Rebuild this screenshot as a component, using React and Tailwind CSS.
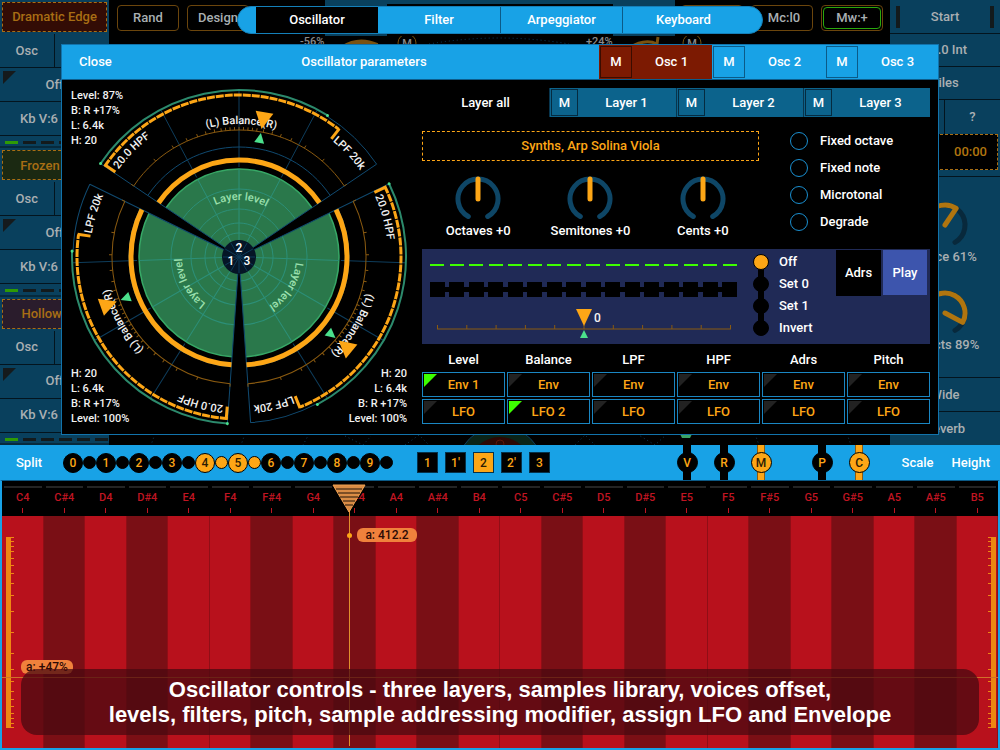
import { useState } from "react";

const instruments = [
  { name: "Dramatic Edge", tint: "bg-[#330c05]" },
  { name: "Frozen Mist", tint: "bg-[#1b2912]" },
  { name: "Hollow Pad", tint: "bg-[#2a1c2c]" },
];

const tabs = ["Oscillator", "Filter", "Arpeggiator", "Keyboard"];
const voices = ["Fixed octave", "Fixed note", "Microtonal", "Degrade"];
const sets = ["Off", "Set 0", "Set 1", "Invert"];

const assigns = [
  { label: "Level", env: "Env 1", lfo: "LFO" },
  { label: "Balance", env: "Env", lfo: "LFO 2" },
  { label: "LPF", env: "Env", lfo: "LFO" },
  { label: "HPF", env: "Env", lfo: "LFO" },
  { label: "Adrs", env: "Env", lfo: "LFO" },
  { label: "Pitch", env: "Env", lfo: "LFO" },
];

const noteNames = ["C", "C#", "D", "D#", "E", "F", "F#", "G", "G#", "A", "A#", "B"];
const notes = [4, 5].flatMap((octave) => noteNames.map((n) => n + octave));

// angle is measured clockwise from straight up
function polar(r, angle) {
  const a = (angle * Math.PI) / 180;
  return [(r * Math.sin(a)).toFixed(2), (-r * Math.cos(a)).toFixed(2)];
}

function arc(r, from, to) {
  const [x1, y1] = polar(r, from);
  const [x2, y2] = polar(r, to);
  return `M${x1} ${y1}A${r} ${r} 0 ${to - from > 180 ? 1 : 0} 1 ${x2} ${y2}`;
}

function spoke(r1, r2, angle) {
  const [x1, y1] = polar(r1, angle);
  const [x2, y2] = polar(r2, angle);
  return `M${x1} ${y1}L${x2} ${y2}`;
}

const EDGE = 56;
const balanceTicks = [2, 4, 6, 8, 11, 15, 19, 24, 31, 41, 56];

/* ---------- layer dial ---------- */

function Sector({ id, rotate, level, ring }) {
  const [ex, ey] = polar(level, EDGE);
  const [sx, sy] = polar(level, -EDGE);
  return (
    <g transform={`rotate(${rotate})`} fill="none">
      <path d={`M0 0L${sx} ${sy}A${level} ${level} 0 0 1 ${ex} ${ey}Z`} fill="#2a784b" />
      <path d={arc(level, -EDGE, EDGE)} stroke="#37a866" strokeWidth="1.5" />
      <path d={[-28, 0, 28].map((a) => spoke(level + 2, 166, a)).join("")} stroke="#0e3d5c" />
      <path d={[-28, 0, 28].map((a) => spoke(17, level, a)).join("")} stroke="#2c8f78" />
      {[24, 34, 48, 68].map((r) => (
        <path key={r} d={arc(r, -EDGE, EDGE)} stroke="#2c8f78" />
      ))}
      <path d={spoke(16, 166, -EDGE) + spoke(16, 166, EDGE) + arc(166, 32, EDGE) + arc(110, -EDGE, EDGE)} stroke="#104a70" />

      <path d={arc(ring, -EDGE, EDGE)} stroke="#fda616" strokeWidth="5" />

      <path d={arc(127, -EDGE, EDGE)} stroke="#8a5a10" />
      <path
        d={balanceTicks.map((a) => spoke(127, 130, a) + spoke(127, 130, -a)).join("") + spoke(127, 130, 0)}
        stroke="#8a5a10"
      />

      <path d={arc(167, -EDGE, 32)} stroke="#2c8a6c" strokeWidth="2" />
      <circle cx={polar(167, 32)[0]} cy={polar(167, 32)[1]} r="1.5" fill="#4be08c" />
      <circle cx={polar(167, -EDGE)[0]} cy={polar(167, -EDGE)[1]} r="1.5" fill="#4be08c" />
      <path d={arc(162, -EDGE, 38)} stroke="#fda616" strokeWidth="3" strokeDasharray="8 1" />
      <path d={spoke(150, 163, -EDGE + 0.5) + spoke(150, 163, 38)} stroke="#fda616" strokeWidth="3" />

      <path id={`${id}-outer`} d={arc(149, -54, EDGE)} />
      <path id={`${id}-lpf`} d={arc(149, 39, 70)} />
      <path id={`${id}-balance`} d={arc(133, -40, 42)} />
      <path id={`${id}-level`} d={arc(57, -56, 60)} />
      <g fill="#f2f2f2" className="text-[11px] font-medium">
        <text><textPath href={`#${id}-outer`}>20.0 HPF</textPath></text>
        <text><textPath href={`#${id}-lpf`}>LPF 20k</textPath></text>
        <text textAnchor="middle"><textPath href={`#${id}-balance`} startOffset="50%">(L) Balance(R)</textPath></text>
        <text textAnchor="middle" fill="#9be0ae"><textPath href={`#${id}-level`} startOffset="50%">Layer level</textPath></text>
      </g>

      <path d="M0 -130L-9 -147L9 -147Z" transform="rotate(10)" fill="#fda616" />
      <path d="M0 -126L-5 -116L5 -116Z" transform="rotate(10)" fill="#4be08c" />
    </g>
  );
}

function Readout({ lines, className }) {
  return (
    <div className={`absolute text-[11px] leading-[15px] text-[#f2f2f2] ${className}`}>
      {lines.map((l) => (
        <div key={l}>{l}</div>
      ))}
    </div>
  );
}

function LayerDial() {
  return (
    <div className="relative w-[354px] shrink-0">
      <svg viewBox="-177 -177 354 354" className="block h-[354px] w-[354px]">
        <Sector id="layer2" rotate={0} level={88} ring={97} />
        <Sector id="layer3" rotate={120} level={100} ring={108} />
        <Sector id="layer1" rotate={240} level={100} ring={108} />
        <circle r="17" fill="#051526" />
        <path
          d={Array.from({ length: 12 }, (_, i) => spoke(0, 16, i * 30)).join("")}
          stroke="#0c3a58"
        />
        <g fill="#fff" textAnchor="middle" className="text-[12px] font-medium">
          <text x="0" y="-5">2</text>
          <text x="-8" y="8">1</text>
          <text x="8" y="8">3</text>
        </g>
      </svg>
      <Readout className="left-[9px] top-2" lines={["Level: 87%", "B: R +17%", "L: 6.4k", "H: 20"]} />
      <Readout className="bottom-2 left-[9px]" lines={["H: 20", "L: 6.4k", "B: R +17%", "Level: 100%"]} />
      <Readout className="bottom-2 right-[9px] text-right" lines={["H: 20", "L: 6.4k", "B: R +17%", "Level: 100%"]} />
    </div>
  );
}

/* ---------- dialog controls ---------- */

function Knob({ label }) {
  return (
    <label className="flex flex-col items-center">
      <span className="relative block">
        <svg viewBox="-24 -24 48 48" className="block size-12" fill="none" strokeLinecap="round">
          <path d={arc(20, -151, 151)} stroke="#0e4666" strokeWidth="5" />
          <path d="M0 -20V0" stroke="#fda616" strokeWidth="5" />
        </svg>
        <input type="range" min="-12" max="12" defaultValue="0" className="absolute inset-0 size-full cursor-pointer opacity-0" />
      </span>
      <span className="leading-4">{label}</span>
    </label>
  );
}

function MuteButton({ className }) {
  return (
    <button className={`flex h-full items-center justify-center border ${className}`}>M</button>
  );
}

function AssignButton({ children }) {
  const on = /\d/.test(children);
  return (
    <button className="relative flex h-[25px] items-center justify-center border border-[#1a86c2] text-[#fda616]">
      <svg viewBox="0 0 13 13" className="absolute left-px top-px size-[13px]">
        <path d="M0 0H13L0 13Z" fill={on ? "#3dff00" : "#222"} />
      </svg>
      {children}
    </button>
  );
}

function StepPanel() {
  const [set, setSet] = useState("Off");
  const steps = Array.from({ length: 16 }, (_, i) => i);
  return (
    <div className="flex h-[95px] bg-[#202a56] pl-2">
      <div className="w-[307px] pt-[15px]">
        <div className="flex justify-between">
          {steps.map((i) => (
            <span key={i} className="h-0.5 w-[14px] bg-[#3dff00]" />
          ))}
        </div>
        <div className="mt-4 flex items-center">
          {steps.map((i) => (
            <span key={i} className="flex flex-1 items-center last:flex-none">
              <span className="h-[15px] w-[15px] bg-black" />
              {i < 15 && <span className="h-[5px] flex-1 bg-black" />}
            </span>
          ))}
        </div>
        <div className="relative mt-3">
          <svg viewBox="0 0 307 32" className="block h-8 w-full">
            <path d="M7 20H301" stroke="#8a5a10" />
            <path d={Array.from({ length: 11 }, (_, i) => `M${7.5 + i * 29.3} 20v-4`).join("")} stroke="#8a5a10" />
            <path d="M146 0H162L154 17Z" fill="#fda616" />
            <path d="M150 29H158L154 21Z" fill="#4be08c" />
            <text x="164" y="13" fill="#f2f2f2" className="text-[12px]">0</text>
          </svg>
          <input
            type="range"
            aria-label="Offset"
            min="-5"
            max="5"
            defaultValue="0"
            className="absolute inset-0 size-full cursor-pointer opacity-0"
          />
        </div>
      </div>
      <div className="ml-4 flex w-20 flex-col pt-[2px]">
        {sets.map((s, i) => (
          <label key={s} className="relative flex h-[22px] items-center gap-2.5">
            {i < 3 && <span className="absolute left-[5px] top-3 h-5 w-1.5 bg-black" />}
            <input
              type="radio"
              name="set"
              checked={set === s}
              onChange={() => setSet(s)}
              className="relative size-4 appearance-none rounded-full border border-black bg-black checked:bg-[#fda616]"
            />
            {s}
          </label>
        ))}
      </div>
      <div className="ml-auto flex gap-0.5 pr-[3px] pt-px">
        <button className="h-[46px] w-[45px] bg-black">Adrs</button>
        <button className="h-[45px] w-[44px] bg-[#3d55ad]">Play</button>
      </div>
    </div>
  );
}

function OscillatorDialog() {
  return (
    <div role="dialog" aria-label="Oscillator parameters" className="absolute inset-x-[61px] top-11 border border-[#1273ab] bg-black text-white">
      <div className="flex h-[35px] border-b border-[#0d5c8a] bg-[#18a2e6]">
        <button className="px-[17px]">Close</button>
        <h2 className="flex flex-1 items-center justify-center">Oscillator parameters</h2>
        <div className="flex w-[339px]">
          {["Osc 1", "Osc 2", "Osc 3"].map((osc, i) => (
            <div key={osc} className={`flex flex-1 p-px ${i === 0 ? "bg-[#7c1a02]" : ""}`}>
              <MuteButton className={i === 0 ? "w-8 border-[#3a0c00]" : "w-8 border-[#0b5a87]"} />
              <button className="flex-1">{osc}</button>
            </div>
          ))}
        </div>
      </div>

      <div className="flex">
        <LayerDial />
        <div className="flex-1 pl-[6px] pr-2 pt-2">
          <div className="grid h-[29px] grid-cols-4">
            <button>Layer all</button>
            {["Layer 1", "Layer 2", "Layer 3"].map((layer) => (
              <div key={layer} className="flex border-l border-[#08354d] bg-[#0c638c] p-px">
                <MuteButton className="w-[27px] border-[#052b40]" />
                <button className="flex-1">{layer}</button>
              </div>
            ))}
          </div>

          <div className="mt-[14px] flex h-[118px]">
            <div className="w-[337px]">
              <button className="h-[30px] w-full border border-dashed border-[#fda616] text-[#fda616]">
                Synths, Arp Solina Viola
              </button>
              <div className="mt-[14px] grid grid-cols-3">
                <Knob label="Octaves +0" />
                <Knob label="Semitones +0" />
                <Knob label="Cents +0" />
              </div>
            </div>
            <div className="ml-[31px] flex flex-col gap-[7px]">
              {voices.map((v) => (
                <label key={v} className="flex h-5 items-center gap-3">
                  <input type="checkbox" className="size-[18px] appearance-none rounded-full border border-[#1a8fd0] checked:bg-[#fda616]" />
                  {v}
                </label>
              ))}
            </div>
          </div>

          <StepPanel />

          <div className="mt-1.5 grid grid-cols-6 gap-x-0.5">
            {assigns.map((a) => (
              <div key={a.label} className="flex flex-col gap-y-0.5">
                <div className="h-5 text-center leading-5">{a.label}</div>
                <AssignButton>{a.env}</AssignButton>
                <AssignButton>{a.lfo}</AssignButton>
              </div>
            ))}
          </div>
        </div>
      </div>
    </div>
  );
}

/* ---------- synth behind the dialog ---------- */

function InstrumentStrip({ name, tint }) {
  return (
    <div className="flex flex-col border-b-2 border-[#062a3d]">
      <div className="h-[34px] p-0.5">
        <button className={`size-full border border-dashed border-[#a86e14] text-[#a86e14] ${tint}`}>{name}</button>
      </div>
      <div className="grid h-[34px] grid-cols-2 border-b border-[#03141e]">
        <button className="border-r border-[#03141e]">Osc</button>
        <button>Mix</button>
      </div>
      <button className="relative h-[34px] border-b border-[#03141e]">
        <svg viewBox="0 0 13 13" className="absolute left-[3px] top-[3px] size-[13px]">
          <path d="M0 0H13L0 13Z" fill="#151a1c" />
        </svg>
        Off
      </button>
      <button className="h-[34px] border-b border-[#03141e] pl-5 text-left">Kb V:6 G:6</button>
      <div className="flex gap-[5px] pl-[5px] pt-[5px]">
        {[0, 1, 2, 3, 4, 5].map((i) => (
          <span key={i} className={`h-[3px] w-[13px] ${i === 0 ? "bg-[#2f9a05]" : "bg-[#131a1c]"}`} />
        ))}
      </div>
    </div>
  );
}

function SideKnob({ label, value }) {
  return (
    <div className="flex flex-col items-center pt-2">
      <svg viewBox="-24 -24 48 48" className="block size-12" fill="none" strokeLinecap="round" strokeLinejoin="round" strokeWidth="5">
        <path d={arc(20, -150, 150)} stroke="#08293c" />
        <path d={`${arc(20, -150, value)}L0 0`} stroke="#b0750f" />
      </svg>
      <div className="h-8 leading-4">{label}</div>
    </div>
  );
}

function BackPanel() {
  return (
    <div className="flex h-[445px] text-[#a9afb2]">
      <div className="grid w-[109px] shrink-0 grid-cols-1 grid-rows-3 bg-[#09405d]">
        {instruments.map((i) => (
          <InstrumentStrip key={i.name} {...i} />
        ))}
      </div>

      <div className="relative min-w-0 flex-1 overflow-hidden">
        <div className="flex px-[7px]">
          <div className="flex gap-2 pl-px pt-[5px]">
            <button className="h-[26px] w-[62px] rounded border border-[#6b450c]">Rand</button>
            <button className="h-[26px] w-[62px] rounded border border-[#6b450c]">Design</button>
          </div>
          <div className="ml-auto mr-1.5 flex h-9 w-[350px] bg-[#09405d] px-[62px] pt-1">
            <div className="flex-1 bg-black" />
          </div>
          <div className="flex gap-2 pt-[5px]">
            <button className="h-[26px] w-[62px] rounded border border-[#6b450c]" aria-label="Mode" />
            <button className="h-[26px] w-[62px] rounded border border-[#6b450c] pl-1">Mc:l0</button>
            <button className="h-[26px] w-[62px] rounded border border-[#6b450c] p-px">
              <span className="flex size-full items-center justify-center rounded border border-[#2aa80c]">Mw:+</span>
            </button>
          </div>
        </div>
        <svg viewBox="0 0 781 409" className="absolute inset-x-0 top-9 h-[409px] w-full" fill="none">
          <g fill="#8a8a8a" className="text-[11px]">
            <text x="191" y="9">-56%</text>
            <text x="477" y="9">+24%</text>
          </g>
          <g stroke="#7a5210">
            <circle cx="298" cy="7" r="9" />
            <circle cx="583" cy="7" r="9" />
            <path d="M234 12Q250 2 268 10" strokeWidth="6" />
            <path d="M520 12Q536 2 548 8L549 1" strokeWidth="3" />
          </g>
          <g fill="#8a8a8a" textAnchor="middle" className="text-[11px]">
            <text x="298" y="11">M</text>
            <text x="583" y="11">M</text>
          </g>
          <path d="M320 8Q390 -4 460 8" stroke="#0e3d5c" strokeDasharray="1 3" />
          <circle cx="391" cy="433" r="43" fill="#0a2418" stroke="#0e3d5c" />
          <circle cx="391" cy="433" r="32" fill="#2c0703" />
          <circle cx="391" cy="408" r="4" stroke="#5c1508" />
          <path
            d="M46 398L42 409M136 398L132 409M200 398L194 409M236 400L254 409L262 400M296 409L310 399L320 409M466 409L476 399L486 409M528 398L546 409L558 398M646 398L650 409M738 398L742 409"
            stroke="#0e3d5c"
            strokeDasharray="1 3"
          />
          <path d="M573 402L571 398H583L581 402Z" fill="#3aa365" />
        </svg>
      </div>

      <div className="flex w-[110px] shrink-0 flex-col bg-[#09405d]">
        <button className="flex h-[34px] items-center justify-between border-b border-[#03141e] px-1.5">
          <span className="h-[22px] w-1 bg-[#131a1c]" />
          Start
          <span className="h-[22px] w-1 bg-[#131a1c]" />
        </button>
        <button className="h-[33px] border-b border-[#03141e]">16.0 Int</button>
        <button className="h-[33px] border-b border-[#03141e]">Files</button>
        <div className="grid h-[34px] grid-cols-2">
          <button className="border-r border-[#03141e]">Rec</button>
          <button>?</button>
        </div>
        <div className="mr-0.5 flex h-[36px] items-center justify-end border border-dashed border-[#a86e14] bg-black pr-[10px] text-[#b0750f]">
          00:00
        </div>
        <div className="mt-1.5 border-t border-[#03141e] pt-4">
          <SideKnob label="Space 61%" value={34} />
          <SideKnob label="Effects 89%" value={118} />
        </div>
        <button className="mt-auto h-[34px] border-t border-[#03141e]">Wide</button>
        <button className="h-[34px] border-t border-[#03141e]">Reverb</button>
      </div>
    </div>
  );
}

function TabPill() {
  return (
    <div className="absolute inset-x-0 top-1.5 flex justify-center text-white">
      <nav className="flex h-[28px] rounded-full border border-[#1480ba] bg-[#18a2e6] px-[18px]">
        {tabs.map((t, i) => (
          <button
            key={t}
            className={`w-[122px] ${i === 0 ? "bg-black" : ""} ${i > 1 ? "border-l border-[#0b5a87]" : ""}`}
          >
            {t}
          </button>
        ))}
      </nav>
    </div>
  );
}

/* ---------- split bar and keyboard ---------- */

function ModeToggle({ label, on }) {
  return (
    <button className="relative flex h-[35px] w-[21px] items-center justify-center">
      <span className={`absolute inset-y-0 left-[6px] w-2 ${on ? "border-x border-[#8a5a10] bg-[#fda616]" : "bg-black"}`} />
      <span
        className={`relative flex size-[21px] items-center justify-center rounded-full border border-black ${
          on ? "bg-[#fda616] text-[#2b1c04]" : "bg-black text-[#fda616]"
        }`}
      >
        {label}
      </span>
    </button>
  );
}

function SplitBar() {
  return (
    <div className="flex h-[35px] items-center bg-[#18a2e6] pl-4 pr-[10px] text-white">
      <button className="w-[47px] text-left">Split</button>
      <div className="flex items-center">
        {Array.from({ length: 10 }, (_, i) => {
          const on = i === 4 || i === 5;
          return (
            <span key={i} className="flex items-center">
              <button
                className={`size-[20px] rounded-full border border-black text-[12px] leading-4 ${
                  on ? "bg-[#fda616] text-[#2b1c04]" : "bg-black text-[#fda616]"
                }`}
              >
                {i}
              </button>
              <span className={`size-[13px] rounded-full border border-black ${on ? "bg-[#fda616]" : "bg-black"}`} />
            </span>
          );
        })}
      </div>
      <div className="ml-6 flex gap-[7px]">
        {["1", "1'", "2", "2'", "3"].map((n) => (
          <button
            key={n}
            className={`size-[21px] border border-[#06324a] text-[12px] ${
              n === "2" ? "bg-[#fda616] text-[#2b1c04]" : "bg-black text-[#fda616]"
            }`}
          >
            {n}
          </button>
        ))}
      </div>
      <div className="ml-auto flex gap-4 text-[12px]">
        <ModeToggle label="V" />
        <ModeToggle label="R" />
        <ModeToggle label="M" on />
      </div>
      <div className="ml-10 flex gap-4 text-[12px]">
        <ModeToggle label="P" />
        <ModeToggle label="C" on />
      </div>
      <button className="ml-8">Scale</button>
      <button className="ml-[18px]">Height</button>
    </div>
  );
}

function Gauge({ className }) {
  const ticks = [0, 4, 9, 14, 21, 28, 36, 46, 58, 74, 95, 116, 132, 144, 154, 162, 169, 176, 181, 186, 190];
  return (
    <svg viewBox="0 0 8 191" className={`absolute top-[56px] h-[191px] w-2 ${className}`}>
      <rect width="5" height="191" fill="#ee8712" />
      <path d={ticks.map((y) => `M0 ${y + 0.5}H8`).join("")} stroke="#ee8712" />
    </svg>
  );
}

function Keyboard() {
  return (
    <div className="relative flex flex-1 flex-col border-2 border-t border-[#18a2e6] border-t-[#0b5a87]">
      <div className="flex flex-1">
        {notes.map((note) => (
          <button key={note} className="flex min-w-0 flex-1 flex-col">
            <span className="flex h-[35px] w-full flex-col items-center bg-black px-0.5 pt-[5px] text-[11px] text-[#c01522]">
              <span className="h-0.5 w-full bg-[#242424]" />
              <span className="mt-0.5 leading-4">{note}</span>
              <span className="mt-[2px] h-[5px] w-px bg-[#c01522]" />
            </span>
            <span
              className={`w-full flex-1 border-r border-[#8f0e16] ${note.includes("#") ? "bg-[#7a0f15]" : "bg-[#b8111c]"}`}
            />
          </button>
        ))}
      </div>

      <Gauge className="left-1" />
      <Gauge className="right-[2px] -scale-x-100" />

      <div className="absolute inset-x-0 top-[196px] h-px bg-[#d0702a]" />
      <div className="absolute bottom-0.5 left-[347px] top-7 w-px bg-[#e0902c]" />
      <svg viewBox="0 0 34 30" className="absolute left-[330px] top-[3px] h-[30px] w-[34px]">
        <path d="M1 1H33L17 28Z" fill="#d98c45" stroke="#f0a050" />
        <path d="M4 5H30M6 9H28M8 13H26M11 17H23M13 21H21" stroke="#5e3b1c" strokeWidth="1.5" />
      </svg>
      <span className="absolute left-[345px] top-[52px] size-[5px] rounded-full bg-[#fda616]" />
      <span className="absolute left-[355px] top-[47px] h-[14px] w-[60px] rounded-md bg-[#f0813c] text-center text-[12px] leading-[14px] text-[#2c0a05]">
        a: 412.2
      </span>
      <span className="absolute left-[19px] top-[179px] h-[14px] w-[52px] rounded-md bg-[#f0813c] text-center text-[12px] leading-[14px] text-[#2c0a05]">
        a: +47%
      </span>

      <p className="absolute inset-x-[19px] bottom-[13px] rounded-2xl bg-[#4a0a10]/75 py-2 text-center font-['Liberation_Sans'] text-[22px] font-bold leading-[25px] text-white">
        Oscillator controls - three layers, samples library, voices offset,
        <br />
        levels, filters, pitch, sample addressing modifier, assign LFO and Envelope
      </p>
    </div>
  );
}

export default function App() {
  return (
    <div className="flex min-h-screen flex-col bg-black font-[Roboto,sans-serif] text-[13px] font-medium">
      <div className="relative">
        <BackPanel />
        <TabPill />
        <OscillatorDialog />
      </div>
      <SplitBar />
      <Keyboard />
    </div>
  );
}
